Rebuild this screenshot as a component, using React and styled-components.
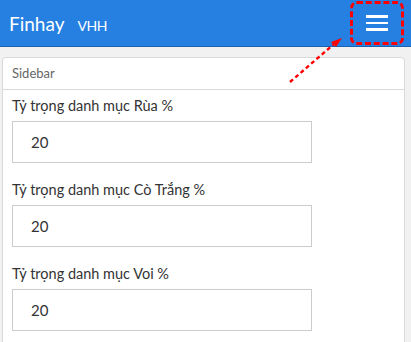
import React from 'react'
import styled, { createGlobalStyle } from 'styled-components'

const colors = {
  blue: '#2680e2',
  blueDark: '#1c62b0',
  page: '#f1f1f1',
  border: '#d9d9d9',
  inputBorder: '#cccccc',
  text: '#333333',
  muted: '#666666',
  red: '#ff0000',
}

const GlobalStyle = createGlobalStyle`
  html, body {
    margin: 0;
    padding: 0;
    background: ${colors.page};
    font-family: Lato, "Open Sans", sans-serif;
  }
`

// Styled Components

const Page = styled.div`
  position: relative;
  width: 411px;
  height: 342px;
  overflow: hidden;
  background: ${colors.page};
`
const Header = styled.header`
  display: flex;
  align-items: center;
  height: 46px;
  padding: 0 7px 0 9px;
  background: ${colors.blue};
  border-bottom: 1px solid ${colors.blueDark};
`
const BrandGroup = styled.div`
  display: flex;
  align-items: baseline;
  padding-top: 1px;
  color: #fff;
`
const Brand = styled.span`
  font-size: 19px;
`
const Account = styled.span`
  margin-left: 13px;
  font-size: 14px;
  letter-spacing: -0.4px;
`
const Toggler = styled.button`
  margin-left: auto;
  width: 54px;
  height: 44px;
  padding: 0;
  display: flex;
  flex-direction: column;
  align-items: center;
  justify-content: center;
  gap: 4px;
  background: transparent;
  border: 3px dashed ${colors.red};
  border-radius: 7px;
`
const Bar = styled.span`
  display: block;
  width: 22px;
  height: 2.5px;
  background: #fff;
`
const Main = styled.main`
  padding: 10px 6px 0 2px;
`
const Card = styled.section`
  background: #fff;
  border: 1px solid ${colors.border};
  border-radius: 4px;
`
const CardHeader = styled.div`
  height: 31px;
  line-height: 31px;
  padding: 0 9px;
  font-size: 13px;
  color: ${colors.muted};
  border-bottom: 1px solid ${colors.border};
`
const CardBody = styled.div`
  padding: 6px 9px 0;
`
const Field = styled.div`
  margin-bottom: 17px;
`
const Label = styled.label`
  display: block;
  height: 20px;
  line-height: 20px;
  margin-bottom: 5px;
  font-size: 14.5px;
  color: ${colors.text};
`
const Input = styled.input`
  box-sizing: border-box;
  display: block;
  width: 300px;
  height: 42px;
  padding: 0 18px;
  border: 1px solid ${colors.inputBorder};
  border-radius: 0;
  font-family: Lato, "Open Sans", sans-serif;
  font-size: 15px;
  color: ${colors.text};
  outline: none;
`
const Annotation = styled.svg`
  position: absolute;
  left: 0;
  top: 0;
  pointer-events: none;
`

const fields = [
  'Tỷ trọng danh mục Rùa %',
  'Tỷ trọng danh mục Cò Trắng %',
  'Tỷ trọng danh mục Voi %',
]

const App = () => (
  <Page>
    <GlobalStyle />
    <Header>
      <BrandGroup>
        <Brand>Finhay</Brand>
        <Account>VHH</Account>
      </BrandGroup>
      <Toggler aria-label="menu">
        <Bar />
        <Bar />
        <Bar />
      </Toggler>
    </Header>
    <Main>
      <Card>
        <CardHeader>Sidebar</CardHeader>
        <CardBody>
          {fields.map(f => (
            <Field key={f}>
              <Label>{f}</Label>
              <Input defaultValue="20" />
            </Field>
          ))}
        </CardBody>
      </Card>
    </Main>
    {/* red arrow pointing at the menu button */}
    <Annotation width="411" height="342">
      <line x1="290" y1="82" x2="334" y2="44" stroke={colors.red} strokeWidth="2.4" strokeDasharray="4 3" />
      <polygon points="342,38 331,42 336,47" fill={colors.red} />
    </Annotation>
  </Page>
)

export default App
